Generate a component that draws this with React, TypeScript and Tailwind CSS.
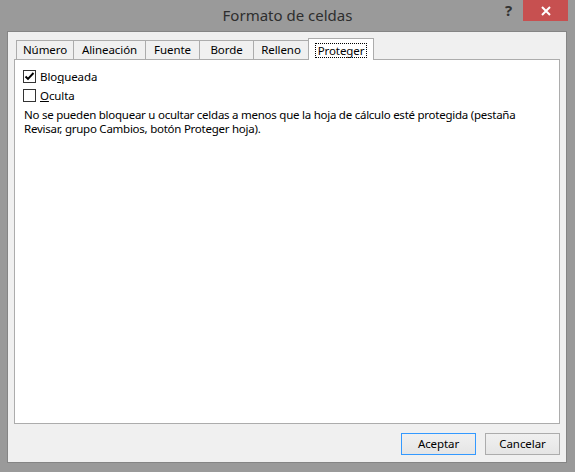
const tabs = [
  { label: "Número", w: "w-[58px]" },
  { label: "Alineación", w: "w-[73px]" },
  { label: "Fuente", w: "w-[55px]" },
  { label: "Borde", w: "w-[55px]" },
  { label: "Relleno", w: "w-[56px]" },
]

function Check({ checked }: { checked?: boolean }) {
  return (
    <span className="w-[13px] h-[13px] border border-[#333333] bg-white flex items-center justify-center shrink-0">
      {checked && (
        <svg width="11" height="11" viewBox="0 0 11 11">
          <path d="M1.5 5.5 L4 8 L9.5 2" fill="none" stroke="#000" strokeWidth="1.9" />
        </svg>
      )}
    </span>
  )
}

export default function App() {
  return (
    <div
      className="w-[575px] h-[472px] bg-[#9a9a9a] flex flex-col text-black"
      style={{ fontFamily: '"Noto Sans", "Liberation Sans", sans-serif' }}
    >
      {/* title bar */}
      <div className="relative h-[31px] flex items-center justify-center shrink-0">
        <span className="text-[15px] text-[#2e2e2e] leading-none -mt-[1px]">Formato de celdas</span>
        <span className="absolute left-[505px] top-[3px] text-[15px] font-bold text-[#333] leading-none">?</span>
        <div className="absolute left-[523px] top-0 w-[45px] h-[21px] bg-[#c75050] flex items-center justify-center">
          <svg width="10" height="10" viewBox="0 0 10 10">
            <path d="M1 1 L9 9 M9 1 L1 9" stroke="#fff" strokeWidth="2" />
          </svg>
        </div>
      </div>

      {/* client area */}
      <div className="flex-1 ml-[7px] mr-[8px] mb-[9px] border border-[#858585] bg-[#f0f0f0] flex flex-col pt-[6px] px-[6px] pb-[7px] text-[11.5px] tracking-[-0.08px]">
        <div className="flex items-end h-[21px] pl-[2px]">
          {tabs.map((t, i) => (
            <div
              key={t.label}
              className={`${t.w} h-[19px] ${i > 0 ? "-ml-px" : ""} border border-b-0 border-[#acacac] bg-[#f0f0f0] flex items-center justify-center leading-none`}
            >
              {t.label}
            </div>
          ))}
          <div className="w-[66px] h-[22px] -ml-px -mb-px relative z-10 border border-b-0 border-[#acacac] bg-white flex items-start justify-center pt-[4px]">
            <span className="border border-dotted border-black px-[2px] h-[15px] flex items-center leading-none">
              Proteger
            </span>
          </div>
        </div>

        <div className="flex-1 border border-[#acacac] bg-white pl-[8px] pt-[10px]">
          <div className="flex items-center gap-[4px] h-[13px]">
            <Check checked />
            <span className="leading-none">
              Blo<span className="underline">q</span>ueada
            </span>
          </div>
          <div className="flex items-center gap-[4px] h-[13px] mt-[6px]">
            <Check />
            <span className="leading-none">
              <span className="underline">O</span>culta
            </span>
          </div>
          <p className="mt-[6px] leading-[13.5px] pl-px whitespace-nowrap tracking-[-0.25px]">
            No se pueden bloquear u ocultar celdas a menos que la hoja de cálculo esté protegida (pestaña
            <br />
            Revisar, grupo Cambios, botón Proteger hoja).
          </p>
        </div>

        <div className="flex justify-end gap-[9px] mt-[9px]">
          <button className="w-[75px] h-[22px] border border-[#3399ff] bg-gradient-to-b from-[#f0f0f0] to-[#e5e5e5] leading-none">
            Aceptar
          </button>
          <button className="w-[75px] h-[22px] border border-[#acacac] bg-gradient-to-b from-[#f0f0f0] to-[#e5e5e5] leading-none">
            Cancelar
          </button>
        </div>
      </div>
    </div>
  )
}
